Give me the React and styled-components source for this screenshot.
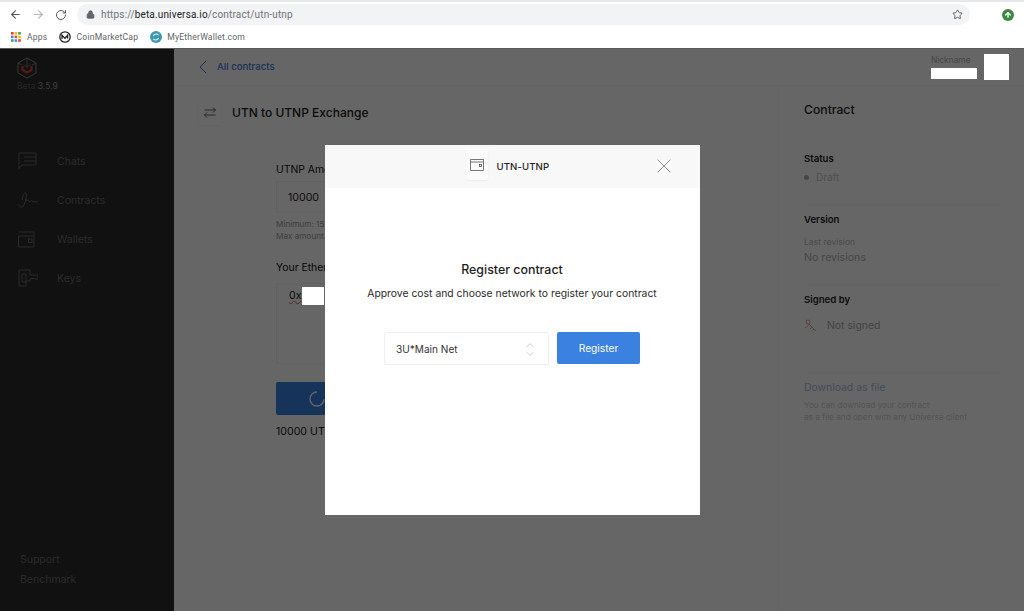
import React from 'react';
import styled, { createGlobalStyle } from 'styled-components';
import { ArrowLeft, ArrowRight, RotateCw, Lock, Star, ChevronLeft, ArrowUp, X } from 'lucide-react';

const GlobalStyle = createGlobalStyle`
  html, body { margin: 0; padding: 0; height: 100%; overflow: hidden; }
  body { font-family: Inter, "Liberation Sans", sans-serif; background: #fff; }
  * { box-sizing: border-box; }
`;

const Page = styled.div`
  display: flex;
  flex-direction: column;
  width: 1024px;
  height: 611px;
`;

/* browser chrome */
const Chrome = styled.div`
  height: 49px;
  flex: none;
  background: #fff;
  border-top: 2px solid #e6e7e9;
  border-bottom: 1px solid #5a5a5a;
  font-family: Roboto, "Liberation Sans", sans-serif;
`;

const Toolbar = styled.div`
  display: flex;
  align-items: center;
  height: 24px;
  padding: 1px 0 0 9px;
`;

const NavButton = styled.span`
  display: flex;
  width: 23px;
  color: ${(p) => (p.$off ? '#b4b6b9' : '#55585c')};
`;

const AddressBar = styled.div`
  display: flex;
  align-items: center;
  width: 893px;
  height: 21px;
  margin-left: -1px;
  padding: 0 7px 0 9px;
  border-radius: 11px;
  background: #f1f3f4;
  font-size: 10px;
  letter-spacing: 0.16px;
  color: #6f7276;
`;

const UrlHost = styled.span`
  color: #222;
`;

const Url = styled.span`
  flex: 1;
  margin-left: 6px;
`;

const ProfileDot = styled.span`
  display: flex;
  align-items: center;
  justify-content: center;
  width: 12px;
  height: 12px;
  margin-left: 32px;
  border-radius: 50%;
  background: #3c8a3f;
  color: #fff;
`;

const Bookmarks = styled.div`
  display: flex;
  align-items: center;
  height: 22px;
  padding-left: 11px;
  font-size: 8.6px;
  letter-spacing: 0.2px;
  color: #5f6368;
`;

const Bookmark = styled.span`
  display: flex;
  align-items: center;
  gap: ${(p) => p.$inner}px;
  margin-right: ${(p) => p.$gap}px;
`;

/* app */
const AppBody = styled.div`
  position: relative;
  flex: 1;
  display: flex;
  min-height: 0;
  background: #fff;
`;

const Sidebar = styled.aside`
  width: 174px;
  flex: none;
  display: flex;
  flex-direction: column;
  background: #2b2b2b;
  padding: 8px 0 0 17px;
`;

const Version = styled.div`
  margin-top: 2px;
  font-size: 8.6px;
  color: #5d5d5d;
`;

const VersionNumber = styled.span`
  color: #9c9c9c;
`;

const Nav = styled.nav`
  display: flex;
  flex-direction: column;
  gap: 15px;
  margin-top: 58px;
`;

const NavItem = styled.div`
  display: flex;
  align-items: center;
  height: 24px;
  gap: 19px;
  font-size: 10.5px;
  color: #6b6b6b;
`;

const NavIcon = styled.svg`
  width: 21px;
  height: 19px;
  flex: none;
  fill: none;
  stroke: #6b6b6b;
  stroke-width: 1;
`;

const SideFooter = styled.div`
  margin-top: auto;
  padding: 0 0 25px 3px;
  display: flex;
  flex-direction: column;
  gap: 7px;
  font-size: 10.5px;
  line-height: 13px;
  color: #6b6b6b;
`;

const Main = styled.main`
  flex: 1;
  display: flex;
  flex-direction: column;
  min-width: 0;
`;

const TopBar = styled.header`
  height: 37px;
  flex: none;
  display: flex;
  align-items: center;
  padding: 0 15px 1px 17px;
  border-bottom: 1px solid #fbfbfb;
`;

const BackLink = styled.a`
  display: flex;
  align-items: center;
  gap: 2px;
  font-size: 9.6px;
  font-weight: 500;
  color: #3a7fdd;
`;

const User = styled.div`
  margin-left: auto;
  display: flex;
  align-items: flex-start;
  gap: 7px;
`;

const UserName = styled.div`
  display: flex;
  flex-direction: column;
  gap: 2px;
  font-size: 8.4px;
  line-height: 12px;
  color: #b0b0b0;
`;

/* white masks sit above the dim layer in the picture */
const Mask = styled.span`
  position: relative;
  z-index: 20;
  display: ${(p) => (p.$inline ? 'inline-block' : 'block')};
  width: ${(p) => p.$w}px;
  height: ${(p) => p.$h}px;
  margin-left: ${(p) => (p.$inline ? 1 : 0)}px;
  background: #fff;
  vertical-align: top;
`;

const Columns = styled.div`
  flex: 1;
  display: flex;
  min-height: 0;
`;

const Content = styled.section`
  flex: 1;
  padding: 13px 0 0 24px;
`;

const TitleRow = styled.div`
  display: flex;
  align-items: center;
  gap: 11px;
`;

const IconCard = styled.span`
  width: 23px;
  height: 26px;
  display: flex;
  align-items: center;
  justify-content: center;
  border-radius: 2px;
  box-shadow: 0 1px 3px rgba(0, 0, 0, 0.05);
  color: #555;
`;

const Title = styled.h1`
  margin: 0;
  font-size: 12px;
  font-weight: 500;
  color: #1d1d1d;
`;

const Form = styled.form`
  display: flex;
  flex-direction: column;
  width: 290px;
  margin: 38px 0 0 78px;
`;

const FieldLabel = styled.label`
  margin-top: ${(p) => p.$top || 0}px;
  font-size: 10.4px;
  line-height: 14px;
  font-weight: 400;
  color: #111;
`;

const AmountInput = styled.div`
  height: 32px;
  margin-top: 4px;
  padding: 0 11px;
  display: flex;
  align-items: center;
  border: 1px solid #f2f2f2;
  border-radius: 2px;
  font-size: 10.6px;
  color: #222;
`;

const Hint = styled.div`
  margin-top: 5px;
  font-size: 8.2px;
  line-height: 12px;
  color: #9a9a9a;
`;

const AddressBox = styled.div`
  height: 81px;
  margin-top: 8px;
  padding: 3px 12px;
  border: 1px solid #f2f2f2;
  border-radius: 2px;
  font-size: 10.6px;
  line-height: 18px;
  color: #222;
`;

const AddressStart = styled.span`
  text-decoration: underline wavy #d9604f 1px;
`;

const SubmitButton = styled.div`
  height: 33px;
  margin-top: 18px;
  display: flex;
  align-items: center;
  padding-left: 33px;
  border-radius: 2px;
  background: #3880e0;
`;

const Note = styled.div`
  margin-top: 10px;
  font-size: 10.6px;
  color: #222;
`;

const Panel = styled.aside`
  width: 246px;
  flex: none;
  padding: 16px 24px 0 25px;
  border-left: 1px solid #fbfbfb;
`;

const PanelTitle = styled.h2`
  margin: 0 0 34px;
  font-size: 12.2px;
  line-height: 16px;
  font-weight: 500;
  color: #1d1d1d;
`;

const Section = styled.div`
  padding-bottom: ${(p) => p.$pb}px;
  margin-bottom: 8px;
  border-bottom: 1px solid #fafafa;
`;

const SectionHead = styled.h3`
  margin: 0;
  font-size: 9.6px;
  line-height: 13px;
  font-weight: 600;
  color: #1d1d1d;
`;

const StatusRow = styled.div`
  display: flex;
  align-items: center;
  gap: 7px;
  margin-top: 6px;
  font-size: 10px;
  line-height: 13px;
  color: #c4c4c4;
`;

const StatusDot = styled.span`
  width: 5px;
  height: 5px;
  border-radius: 50%;
  background: #b0b0b0;
`;

const SmallLabel = styled.div`
  margin-top: 10px;
  font-size: 8.6px;
  line-height: 12px;
  color: #bcbcbc;
`;

const Muted = styled.div`
  margin-top: 3px;
  font-size: 10.6px;
  line-height: 14px;
  color: #b0b0b0;
`;

const SignedRow = styled.div`
  display: flex;
  align-items: center;
  gap: 9px;
  margin-top: 13px;
  font-size: 10.4px;
  line-height: 14px;
  color: #a8a8a8;
`;

const DownloadLink = styled.a`
  display: block;
  font-size: 10.4px;
  line-height: 14px;
  color: #a0bfe8;
`;

const Caption = styled.div`
  margin-top: 4px;
  font-size: 8.2px;
  line-height: 12px;
  color: #cfcfcf;
`;

/* modal */
const Overlay = styled.div`
  position: absolute;
  inset: 0;
  z-index: 10;
  display: flex;
  align-items: center;
  justify-content: center;
  background: rgba(0, 0, 0, 0.6);
`;

const Modal = styled.div`
  width: 375px;
  height: 370px;
  display: flex;
  flex-direction: column;
  align-items: center;
  background: #fff;
`;

const ModalHead = styled.div`
  align-self: stretch;
  height: 43px;
  display: flex;
  align-items: flex-start;
  padding-left: 141px;
  background: #f8f8f8;
`;

const ModalIcon = styled.span`
  width: 22px;
  height: 31px;
  margin-top: 4px;
  display: flex;
  align-items: center;
  justify-content: center;
  background: #fbfbfb;
  border-radius: 2px;
  box-shadow: 0 1px 2px rgba(0, 0, 0, 0.05);
`;

const ModalName = styled.span`
  margin: 15px 0 0 9px;
  font-size: 9.6px;
  line-height: 13px;
  font-weight: 500;
  letter-spacing: 0.1px;
  color: #222;
`;

const CloseButton = styled.span`
  margin: 9px 0 0 103px;
  display: flex;
  color: #8f8f8f;
`;

const ModalTitle = styled.h2`
  margin: 74px 0 0;
  font-size: 12.4px;
  line-height: 16px;
  font-weight: 500;
  color: #1d1d1d;
`;

const ModalText = styled.p`
  margin: 9px 0 0;
  font-size: 10.38px;
  line-height: 13px;
  color: #2a2a2a;
`;

const ModalActions = styled.div`
  display: flex;
  align-items: flex-start;
  gap: 8px;
  margin-top: 32px;
`;

const NetSelect = styled.div`
  width: 165px;
  height: 33px;
  display: flex;
  align-items: center;
  justify-content: space-between;
  padding: 1px 14px 0 11px;
  border: 1px solid #eee;
  border-radius: 2px;
  font-size: 10.1px;
  color: #333;
`;

const RegisterButton = styled.button`
  width: 83px;
  height: 32px;
  border: none;
  border-radius: 2px;
  background: #3b82e0;
  color: #fff;
  font-family: inherit;
  font-size: 10.2px;
  padding: 0 0 1px;
`;

const appColors = ['#ea4335', '#fbbc05', '#34a853', '#4285f4', '#ea4335', '#fbbc05', '#34a853', '#4285f4', '#ea4335'];

const AppsIcon = () => (
  <svg width="10" height="10" viewBox="0 0 10 10">
    {appColors.map((c, i) => (
      <rect key={i} x={(i % 3) * 3.6} y={Math.floor(i / 3) * 3.6} width="2.6" height="2.6" fill={c} />
    ))}
  </svg>
);

const CmcIcon = () => (
  <svg width="12" height="12" viewBox="0 0 12 12" fill="none">
    <circle cx="6" cy="6" r="5.2" stroke="#222" strokeWidth="1.3" />
    <path d="M3 8V4.2L6 7.2 8.6 4.2V7.4" stroke="#222" strokeWidth="1.3" />
  </svg>
);

const MewIcon = () => (
  <svg width="12" height="12" viewBox="0 0 12 12" fill="none">
    <circle cx="6" cy="6" r="6" fill="#3d9ab1" />
    <path d="M8.6 4.2A3 3 0 0 0 3.4 5M3.4 7.8A3 3 0 0 0 8.6 7" stroke="#e8f4f6" strokeWidth="1.1" />
  </svg>
);

const Logo = () => (
  <svg width="20" height="22" viewBox="0 0 20 22" fill="none">
    <path d="M10 1L19 6V16L10 21L1 16V6Z" stroke="#8a8a8a" strokeWidth="1" />
    <path d="M10 1V10M7 7.5L10 10.5L13 7.5M1 6L5 8M19 6L15 8" stroke="#8a8a8a" strokeWidth="0.8" />
    <path d="M5.5 9V13L10 15.5L14.5 13V9" stroke="#d4452f" strokeWidth="2.2" />
  </svg>
);

const ChatIcon = () => (
  <NavIcon viewBox="0 0 21 19">
    <path d="M2 1H19V13H5L2 16.5Z" />
    <path d="M7 5H19M7 9H19" />
  </NavIcon>
);

const SignIcon = () => (
  <NavIcon viewBox="0 0 21 19">
    <path d="M5 9C6 3 8 1 9 2C10 4 8 14 5.5 16C4 17 2 15 1.5 13" />
    <path d="M9 8C10 12 11 7 12 10C13 13 14 8 15 10C16 12 18 10 21 11" />
  </NavIcon>
);

const WalletNavIcon = () => (
  <NavIcon viewBox="0 0 21 19">
    <path d="M1.5 2H17V6M1.5 6H17V17H1.5Z" />
    <rect x="11.5" y="9" width="3.5" height="3.5" />
  </NavIcon>
);

const KeyIcon = () => (
  <NavIcon viewBox="0 0 21 19">
    <path d="M2 1H13V6H21V10H18L17 9L16 10L15 9L14 10H13V12H9V17H2Z" />
    <path d="M5 5H9V13H5Z" />
  </NavIcon>
);

const WalletIcon = () => (
  <svg width="14" height="12" viewBox="0 0 14 12" fill="none" stroke="#555" strokeWidth="0.8">
    <path d="M0.5 0.5H13.5V11.5H0.5Z" />
    <path d="M0.5 3H13.5" />
    <rect x="9.5" y="5.5" width="2" height="2" />
  </svg>
);

const ExchangeIcon = () => (
  <svg width="12" height="11" viewBox="0 0 12 11" fill="none" stroke="#555" strokeWidth="0.9">
    <path d="M0.5 3H11.5M9 0.5L11.5 3L9 5.5" />
    <path d="M11.5 8H0.5M3 5.5L0.5 8L3 10.5" />
  </svg>
);

const Spinner = () => (
  <svg width="16" height="16" viewBox="0 0 16 16" fill="none">
    <path d="M8 1A7 7 0 1 0 15 8" stroke="#fff" strokeWidth="1.3" />
  </svg>
);

const PensIcon = () => (
  <svg width="14" height="14" viewBox="0 0 14 14" fill="none" stroke="#e0a89c" strokeWidth="1">
    <circle cx="4" cy="3" r="2" />
    <path d="M5 5L12 12M8 8L6 10M10 10L8.5 11.5M1 9L5 6" />
  </svg>
);

const UpDownIcon = () => (
  <svg width="8" height="13" viewBox="0 0 8 13" fill="none" stroke="#bdbdbd" strokeWidth="0.8">
    <path d="M0.5 4L4 0.7L7.5 4M0.5 9L4 12.3L7.5 9" />
  </svg>
);

const App = () => (
  <Page>
    <GlobalStyle />
    <Chrome>
      <Toolbar>
        <NavButton><ArrowLeft size={13} /></NavButton>
        <NavButton $off><ArrowRight size={13} /></NavButton>
        <NavButton><RotateCw size={12} /></NavButton>
        <AddressBar>
          <Lock size={9} fill="#5f6368" color="#5f6368" />
          <Url>
            https://<UrlHost>beta.universa.io</UrlHost>/contract/utn-utnp
          </Url>
          <Star size={11} color="#55585c" />
        </AddressBar>
        <ProfileDot><ArrowUp size={8} strokeWidth={4} /></ProfileDot>
      </Toolbar>
      <Bookmarks>
        <Bookmark $inner={6} $gap={11}><AppsIcon />Apps</Bookmark>
        <Bookmark $inner={6} $gap={12}><CmcIcon />CoinMarketCap</Bookmark>
        <Bookmark $inner={5} $gap={0}><MewIcon />MyEtherWallet.com</Bookmark>
      </Bookmarks>
    </Chrome>

    <AppBody>
      <Sidebar>
        <Logo />
        <Version>Beta <VersionNumber>3.5.9</VersionNumber></Version>
        <Nav>
          <NavItem><ChatIcon />Chats</NavItem>
          <NavItem><SignIcon />Contracts</NavItem>
          <NavItem><WalletNavIcon />Wallets</NavItem>
          <NavItem><KeyIcon />Keys</NavItem>
        </Nav>
        <SideFooter>
          <span>Support</span>
          <span>Benchmark</span>
        </SideFooter>
      </Sidebar>

      <Main>
        <TopBar>
          <BackLink><ChevronLeft size={24} strokeWidth={1} />All contracts</BackLink>
          <User>
            <UserName>
              Nickname
              <Mask $w={46} $h={11} />
            </UserName>
            <Mask $w={25} $h={26} />
          </User>
        </TopBar>
        <Columns>
          <Content>
            <TitleRow>
              <IconCard><ExchangeIcon /></IconCard>
              <Title>UTN to UTNP Exchange</Title>
            </TitleRow>
            <Form>
              <FieldLabel>UTNP Amount</FieldLabel>
              <AmountInput>10000</AmountInput>
              <Hint>
                Minimum: 15
                <br />
                Max amount
              </Hint>
              <FieldLabel $top={19}>Your Ethereum address</FieldLabel>
              <AddressBox>
                <AddressStart>0x</AddressStart><Mask $inline $w={22} $h={18} />
              </AddressBox>
              <SubmitButton><Spinner /></SubmitButton>
              <Note>10000 UTNP</Note>
            </Form>
          </Content>
          <Panel>
            <PanelTitle>Contract</PanelTitle>
            <Section $pb={20}>
              <SectionHead>Status</SectionHead>
              <StatusRow><StatusDot />Draft</StatusRow>
            </Section>
            <Section $pb={19}>
              <SectionHead>Version</SectionHead>
              <SmallLabel>Last revision</SmallLabel>
              <Muted>No revisions</Muted>
            </Section>
            <Section $pb={39}>
              <SectionHead>Signed by</SectionHead>
              <SignedRow><PensIcon />Not signed</SignedRow>
            </Section>
            <DownloadLink>Download as file</DownloadLink>
            <Caption>
              You can download your contract
              <br />
              as a file and open with any Universa client
            </Caption>
          </Panel>
        </Columns>
      </Main>

      <Overlay>
        <Modal>
          <ModalHead>
            <ModalIcon><WalletIcon /></ModalIcon>
            <ModalName>UTN-UTNP</ModalName>
            <CloseButton><X size={24} strokeWidth={1} /></CloseButton>
          </ModalHead>
          <ModalTitle>Register contract</ModalTitle>
          <ModalText>Approve cost and choose network to register your contract</ModalText>
          <ModalActions>
            <NetSelect>
              3U*Main Net
              <UpDownIcon />
            </NetSelect>
            <RegisterButton>Register</RegisterButton>
          </ModalActions>
        </Modal>
      </Overlay>
    </AppBody>
  </Page>
);

export default App;
